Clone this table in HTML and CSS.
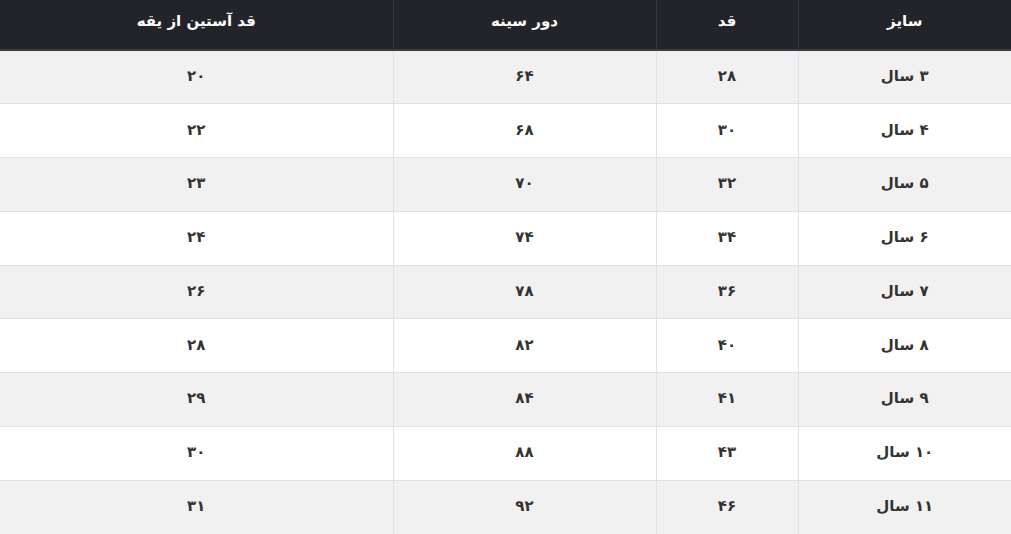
FILE: index.html
```html
<!DOCTYPE html>
<html lang="fa" dir="rtl">
<head>
<meta charset="utf-8">
<link rel="stylesheet" href="styles.css">
</head>
<body>
<table class="size-table">
  <colgroup>
    <col class="c1"><col class="c2"><col class="c3"><col class="c4">
  </colgroup>
  <thead>
    <tr><th>سایز</th><th>قد</th><th>دور سینه</th><th>قد آستین از یقه</th></tr>
  </thead>
  <tbody>
    <tr><td>۳ سال</td><td>۲۸</td><td>۶۴</td><td>۲۰</td></tr>
    <tr><td>۴ سال</td><td>۳۰</td><td>۶۸</td><td>۲۲</td></tr>
    <tr><td>۵ سال</td><td>۳۲</td><td>۷۰</td><td>۲۳</td></tr>
    <tr><td>۶ سال</td><td>۳۴</td><td>۷۴</td><td>۲۴</td></tr>
    <tr><td>۷ سال</td><td>۳۶</td><td>۷۸</td><td>۲۶</td></tr>
    <tr><td>۸ سال</td><td>۴۰</td><td>۸۲</td><td>۲۸</td></tr>
    <tr><td>۹ سال</td><td>۴۱</td><td>۸۴</td><td>۲۹</td></tr>
    <tr><td>۱۰ سال</td><td>۴۳</td><td>۸۸</td><td>۳۰</td></tr>
    <tr><td>۱۱ سال</td><td>۴۶</td><td>۹۲</td><td>۳۱</td></tr>
  </tbody>
</table>
</body>
</html>
```
FILE: styles.css
```css
html, body {
  margin: 0;
  padding: 0;
  background: #ffffff;
}
body {
  font-family: "DejaVu Sans", "Noto Sans", sans-serif;
  direction: rtl;
}
.size-table {
  width: 1011px;
  border-collapse: collapse;
  table-layout: fixed;
}
.c1 { width: 213px; }
.c2 { width: 142px; }
.c3 { width: 263px; }
.c4 { width: 393px; }
.size-table th {
  background: #222429;
  color: #ffffff;
  font-weight: bold;
  font-size: 15px;
  height: 50px;
  padding: 0 0 8px 0;
  text-align: center;
  vertical-align: middle;
  border-left: 1px solid #34373d;
  border-bottom: 2px solid #393c43;
  box-sizing: border-box;
}
.size-table th:last-child { border-left: none; }
.size-table td {
  color: #333333;
  font-weight: bold;
  font-size: 15px;
  height: 53.78px;
  padding: 0 0 2px 0;
  text-align: center;
  vertical-align: middle;
  border-left: 1px solid #dfe1e6;
  border-top: 1px solid #e0e1e6;
  box-sizing: border-box;
}
.size-table td:last-child { border-left: none; }
.size-table tbody tr:nth-child(odd) td { background: #f1f1f1; }
.size-table tbody tr:nth-child(even) td { background: #ffffff; }
```
